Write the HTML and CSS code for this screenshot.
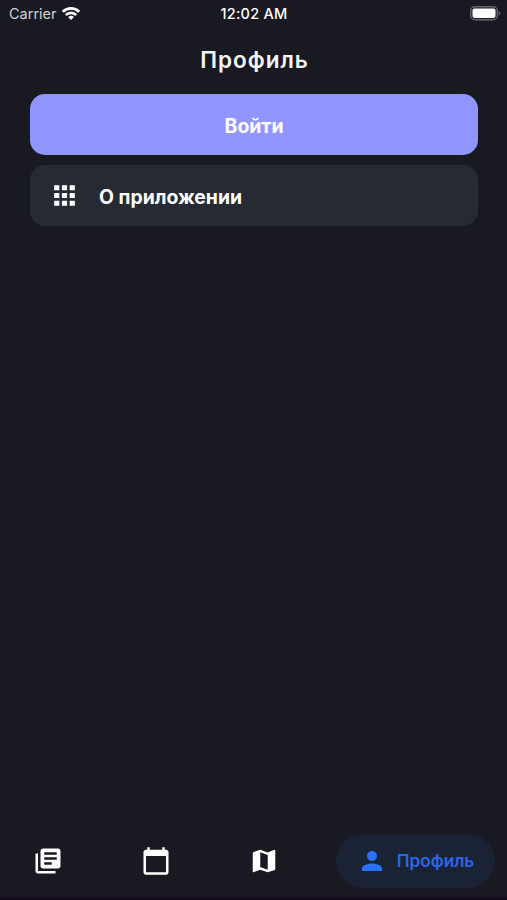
FILE: index.html
```html
<!DOCTYPE html>
<html lang="ru">
<head>
<meta charset="utf-8">
<title>Профиль</title>
<link rel="stylesheet" href="styles.css">
</head>
<body>
<div class="screen">
  <header class="status">
    <div class="carrier"><span class="carrier-name">Carrier</span>
      <svg class="wifi" viewBox="0 0 18 13"><g fill="none" stroke="#fff" stroke-width="2.6"><path d="M.8 4.8a11.6 11.6 0 0 1 16.4 0"/><path d="M3.8 8a7.4 7.4 0 0 1 10.4 0"/></g><path fill="#fff" d="M6.1 10.1a4.1 4.1 0 0 1 5.8 0L9 13z"/></svg>
    </div>
    <span class="clock">12:02 AM</span>
    <div class="power"><svg class="battery" viewBox="0 0 31 15"><rect x=".7" y=".7" width="26.6" height="13.1" rx="4" fill="none" stroke="#66676d" stroke-width="1.4"/><rect x="2.5" y="2.5" width="23" height="9.5" rx="2" fill="#fff"/><path d="M28.7 5c2.2.8 2.2 3.700 0 4.500z" fill="#66676d"/></svg></div>
  </header>
  <h1 class="title"><span>Профиль</span></h1>
  <main class="content">
    <button class="login"><span>Войти</span></button>
    <button class="about">
      <svg class="apps" viewBox="0 0 24 24"><path d="M4 8h4V4H4v4zm6 12h4v-4h-4v4zm-6 0h4v-4H4v4zm0-6h4v-4H4v4zm6 0h4v-4h-4v4zm6-10v4h4V4h-4zm-6 4h4V4h-4v4zm6 6h4v-4h-4v4zm0 6h4v-4h-4v4z"/></svg>
      <span>О приложении</span>
    </button>
  </main>
  <nav class="tabs">
    <a class="tab"><svg viewBox="0 0 24 24"><path d="M4 6H2v14c0 1.100.9 2 2 2h14v-2H4V6zm16-4H8c-1.100 0-2 .9-2 2v12c0 1.100.9 2 2 2h12c1.100 0 2-.9 2-2V4c0-1.100-.9-2-2-2zm-1 9H9V9h10v2zm-4 4H9v-2h6v2zm4-8H9V5h10v2z"/></svg></a>
    <a class="tab"><svg viewBox="0 0 24 24"><path d="M20 3h-1V1h-2v2H7V1H5v2H4c-1.100 0-2 .9-2 2v16c0 1.100.9 2 2 2h16c1.100 0 2-.9 2-2V5c0-1.100-.9-2-2-2zm0 18H4V8h16v13z"/></svg></a>
    <a class="tab"><svg viewBox="0 0 24 24"><path d="M20.500 3l-.16.03L15 5.100 9 3 3.360 4.900c-.21.07-.36.25-.36.48V20.500c0 .28.22.5.5.5l.16-.03L9 18.900l6 2.100 5.640-1.900c.21-.07.36-.25.36-.48V3.500c0-.28-.22-.5-.5-.5zM15 19l-6-2.110V5l6 2.110V19z"/></svg></a>
    <a class="tab active"><svg viewBox="0 0 24 24"><path d="M12 12c2.210 0 4-1.790 4-4s-1.790-4-4-4-4 1.790-4 4 1.790 4 4 4zm0 2c-2.670 0-8 1.340-8 4v2h16v-2c0-2.660-5.330-4-8-4z"/></svg><span>Профиль</span></a>
  </nav>
</div>
</body>
</html>
```
FILE: styles.css
```css
* { box-sizing: border-box; }
body { margin: 0; background: #191a21; color: #fff; font-family: Inter, sans-serif; }
.screen { height: 900px; display: flex; flex-direction: column; border-bottom: 3px solid #150c1c; }
.status { height: 26px; display: grid; grid-template-columns: 1fr auto 1fr; align-items: center; padding: 0 6px 0 9px; font-size: 14.5px; }
.carrier { display: flex; align-items: center; gap: 5px; }
.carrier-name { color: #d0d0d4; }
.wifi { width: 18px; height: 13px; }
.clock { font-weight: 500; letter-spacing: .25px; margin-left: -2px; }
.power { display: flex; justify-content: flex-end; }
.battery { width: 31px; height: 15px; }
.title { height: 68px; margin: 0; padding: 0 0 1px 2px; display: flex; align-items: center; justify-content: center; font-size: 22.5px; line-height: 28px; font-weight: 600; color: #f4f4f5; letter-spacing: 1px; }
.content { display: flex; flex-direction: column; gap: 10px; padding: 0 29px 0 30px; }
button { height: 61px; border: 0; border-radius: 15px; font: 700 19.4px Inter, sans-serif; color: #fff; display: flex; align-items: center; }
button span { padding-top: 2px; }
.login { background: #9196ff; justify-content: center; }
.about { background: #262a33; padding: 0 19px; gap: 19px; }
.apps { width: 31px; height: 31px; fill: #fff; }
.tabs { margin-top: auto; height: 73px; padding: 0 12px 0 0; display: flex; align-items: center; }
.tab { width: 108px; height: 54px; display: flex; align-items: center; justify-content: center; }
.tab:first-child { margin-left: -6.3px; }
.tab svg { width: 30px; height: 30px; fill: #fff; }
.active { width: 159px; margin-left: auto; border-radius: 27px; background: #1a2235; color: #2c66e5; font-size: 17.2px; font-weight: 600; gap: 10px; }
.tab.active svg { fill: #2970ff; }
```
